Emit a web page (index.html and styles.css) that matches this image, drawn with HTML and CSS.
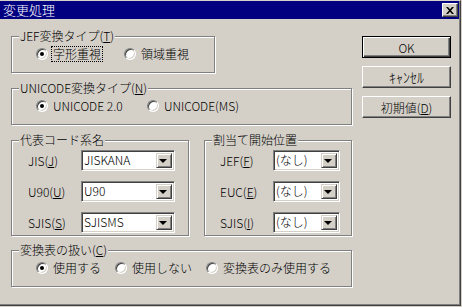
FILE: index.html
```html
<!DOCTYPE html>
<html lang="ja">
<head>
<meta charset="UTF-8">
<title>変更処理</title>
<link rel="stylesheet" href="styles.css">
</head>
<body>
<div class="window">
  <div class="titlebar">
    <span class="title">変更処理</span>
    <span class="close">
      <svg width="8" height="7" viewBox="0 0 8 7"><path d="M0 0h2l2 2.2L6 0h2L5 3.5 8 7H6L4 4.8 2 7H0l3-3.5z" fill="#000"/></svg>
    </span>
  </div>

  <div class="client">
    <div class="main">
      <div class="group g1">
        <span class="legend">JEF変換タイプ(<u>T</u>)</span>
        <div class="options">
          <label class="opt"><span class="radio on"></span><span class="focus">字形重視</span></label>
          <label class="opt"><span class="radio"></span><span>領域重視</span></label>
        </div>
      </div>

      <div class="group g2">
        <span class="legend">UNICODE変換タイプ(<u>N</u>)</span>
        <div class="options">
          <label class="opt"><span class="radio on"></span><span>UNICODE 2.0</span></label>
          <label class="opt"><span class="radio"></span><span>UNICODE(MS)</span></label>
        </div>
      </div>

      <div class="pair">
        <div class="group g3">
          <span class="legend">代表コード系名</span>
          <div class="fields">
            <span class="lbl">JIS(<u>J</u>)</span><span class="combo">JISKANA<span class="drop"></span></span>
            <span class="lbl">U90(<u>U</u>)</span><span class="combo">U90<span class="drop"></span></span>
            <span class="lbl">SJIS(<u>S</u>)</span><span class="combo">SJISMS<span class="drop"></span></span>
          </div>
        </div>
        <div class="group g4">
          <span class="legend">割当て開始位置</span>
          <div class="fields">
            <span class="lbl">JEF(<u>F</u>)</span><span class="combo">(なし)<span class="drop"></span></span>
            <span class="lbl">EUC(<u>E</u>)</span><span class="combo">(なし)<span class="drop"></span></span>
            <span class="lbl">SJIS(<u>I</u>)</span><span class="combo">(なし)<span class="drop"></span></span>
          </div>
        </div>
      </div>

      <div class="group g5">
        <span class="legend">変換表の扱い(<u>C</u>)</span>
        <div class="options">
          <label class="opt"><span class="radio on"></span><span>使用する</span></label>
          <label class="opt"><span class="radio"></span><span>使用しない</span></label>
          <label class="opt"><span class="radio"></span><span>変換表のみ使用する</span></label>
        </div>
      </div>
    </div>

    <div class="buttons">
      <span class="btn default">OK</span>
      <span class="btn kana">ｷｬﾝｾﾙ</span>
      <span class="btn">初期値(<u>D</u>)</span>
    </div>
  </div>
</div>
</body>
</html>
```

FILE: styles.css
```css
body {
    margin: 0;
    background: #d4d0c8;
    font-family: "Noto Sans CJK JP", "DejaVu Sans", sans-serif;
    font-size: 12px;
    font-weight: 300;
    color: #000;
}

u {
    text-decoration: underline;
    text-underline-offset: 1px;
}

.window {
    box-sizing: border-box;
    width: 461px;
    height: 306px;
    border-top: 1px solid #d4d0c8;
    border-right: 1px solid #404040;
    border-bottom: 1px solid #404040;
    box-shadow: inset -1px -1px 0 #808080;
    background: #d4d0c8;
}

.titlebar {
    height: 18px;
    margin-right: 1px;
    background: #000080;
    display: flex;
    align-items: center;
    justify-content: space-between;
    color: #fff;
}

.title {
    padding-left: 3px;
    font-size: 13px;
    line-height: 18px;
}

.close {
    box-sizing: border-box;
    width: 16px;
    height: 14px;
    margin-right: 1px;
    display: flex;
    align-items: center;
    justify-content: center;
    background: #d4d0c8;
    border: 1px solid;
    border-color: #fff #404040 #404040 #fff;
    box-shadow: inset -1px -1px 0 #808080;
}

.client {
    display: flex;
    align-items: flex-start;
}

.main {
    margin-left: 11px;
    width: 341px;
}

/* etched group box */
.group {
    position: relative;
    box-sizing: border-box;
    height: 37px;
    border: 1px solid #808080;
    box-shadow: inset 1px 1px 0 #fff, 1px 1px 0 #fff;
}

.legend {
    position: absolute;
    top: -8px;
    left: 7px;
    padding: 0 1px;
    line-height: 14px;
    background: #d4d0c8;
    white-space: nowrap;
}

.g1 {
    width: 204px;
    margin-top: 17px;
}

.g2 {
    margin-top: 15px;
}

.g5 {
    margin-top: 14px;
}

.options {
    display: grid;
    align-items: center;
    height: 14px;
    padding: 10px 0 0 24px;
}

.g1 .options {
    grid-template-columns: 88px auto;
}

.g2 .options {
    grid-template-columns: 111px auto;
}

.g5 .options {
    grid-template-columns: 79px 91px auto;
}

.opt {
    display: flex;
    align-items: center;
    line-height: 14px;
    white-space: nowrap;
}

.radio {
    position: relative;
    box-sizing: border-box;
    width: 12px;
    height: 12px;
    margin-right: 5px;
    border-radius: 50%;
    background: #fff;
    border: 1px solid;
    border-color: #808080 #fff #fff #808080;
    box-shadow: inset 1px 1px 0 #404040, inset -1px -1px 0 #d4d0c8;
    flex: none;
}

.radio.on::after {
    content: "";
    position: absolute;
    left: 3px;
    top: 3px;
    width: 4px;
    height: 4px;
    border-radius: 50%;
    background: #000;
}

.focus {
    outline: 1px dotted #000;
    outline-offset: 0;
    padding: 0 1px;
    margin-left: -1px;
}

.pair {
    display: flex;
    gap: 15px;
    margin-top: 15px;
}

.g3,
.g4 {
    height: 96px;
}

.g3 {
    width: 178px;
}

.g4 {
    width: 148px;
}

.fields {
    display: grid;
    grid-template-columns: 53px auto;
    grid-auto-rows: 21px;
    row-gap: 10px;
    align-items: center;
    padding: 9px 0 0 16px;
}

.g3 .fields {
    grid-template-columns: 53px 94px;
}

.g4 .fields {
    padding-left: 15px;
    grid-template-columns: 53px 67px;
}

.lbl {
    white-space: nowrap;
}

.combo {
    position: relative;
    box-sizing: border-box;
    height: 21px;
    padding-left: 2px;
    line-height: 17px;
    background: #fff;
    border: 1px solid;
    border-color: #808080 #fff #fff #808080;
    box-shadow: inset 1px 1px 0 #404040, inset -1px -1px 0 #d4d0c8;
}

.drop {
    position: absolute;
    top: 2px;
    right: 2px;
    box-sizing: border-box;
    width: 16px;
    height: 15px;
    background: #d4d0c8;
    border: 1px solid;
    border-color: #d4d0c8 #404040 #404040 #d4d0c8;
    box-shadow: inset 1px 1px 0 #fff, inset -1px -1px 0 #808080;
}

.drop::after {
    content: "";
    position: absolute;
    left: 3px;
    top: 5px;
    border-left: 4px solid transparent;
    border-right: 4px solid transparent;
    border-top: 4px solid #000;
    width: 0;
    height: 0;
    margin-left: -1px;
}

.buttons {
    display: flex;
    flex-direction: column;
    gap: 8px;
    margin: 17px 0 0 10px;
}

.btn {
    box-sizing: border-box;
    width: 89px;
    height: 22px;
    display: flex;
    align-items: center;
    justify-content: center;
    background: #d4d0c8;
    border: 1px solid;
    border-color: #fff #404040 #404040 #fff;
    box-shadow: inset -1px -1px 0 #808080;
    white-space: nowrap;
}

.btn.kana {
    font-size: 14px;
}

.btn.default {
    border-color: #000;
    box-shadow: inset 1px 1px 0 #fff, inset -1px -1px 0 #404040, inset -2px -2px 0 #808080;
}
```
